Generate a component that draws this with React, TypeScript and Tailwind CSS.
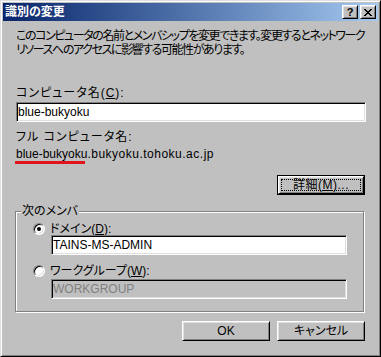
import React from "react";

const raised =
  "border border-t-white border-l-white border-b-black border-r-black shadow-[inset_1px_1px_#dfdfdf,inset_-1px_-1px_#808080]";
const sunken =
  "border border-t-[#808080] border-l-[#808080] border-b-white border-r-white shadow-[inset_1px_1px_#000,inset_-1px_-1px_#dfdfdf]";

function Radio({ checked }: { checked?: boolean }) {
  return (
    <div className="w-[12px] h-[12px] rounded-full border border-t-[#808080] border-l-[#808080] border-b-white border-r-white bg-white shadow-[inset_1px_1px_#000,inset_-1px_-1px_#dfdfdf] flex items-center justify-center shrink-0">
      {checked && <div className="w-[4px] h-[4px] rounded-full bg-black" />}
    </div>
  );
}

function U({ children }: { children: React.ReactNode }) {
  return <span className="underline underline-offset-[1px]">{children}</span>;
}

export default function App() {
  return (
    <div
      className="w-[381px] h-[357px] overflow-hidden bg-[#c0c0c0] border border-t-[#dfdfdf] border-l-[#dfdfdf] border-b-black border-r-black shadow-[inset_1px_1px_#fff,inset_-1px_-1px_#808080] p-[2px] flex flex-col text-black text-[12px] leading-[14px] [font-feature-settings:'palt']"
      style={{ fontFamily: '"Liberation Sans", "Noto Sans CJK JP", sans-serif' }}
    >
      {/* Title bar */}
      <div className="h-[18px] bg-gradient-to-r from-[#0a246a] to-[#a6caf0] flex items-center pl-[2px] pr-[2px]">
        <span className="text-white font-bold text-[12px] leading-[14px] flex-1">識別の変更</span>
        <div className="flex gap-[2px]">
          <div className={`w-[16px] h-[14px] bg-[#c0c0c0] ${raised} flex items-center justify-center`}>
            <span className="font-bold text-[11px] leading-[11px] text-black" style={{ fontFamily: '"Liberation Sans", sans-serif' }}>?</span>
          </div>
          <div className={`w-[16px] h-[14px] bg-[#c0c0c0] ${raised} flex items-center justify-center`}>
            <svg width="8" height="7" viewBox="0 0 8 7" shapeRendering="crispEdges">
              <path d="M0 0h2v1H0zM6 0h2v1H6zM1 1h2v1H1zM5 1h2v1H5zM2 2h4v1H2zM3 3h2v1H3zM2 4h4v1H2zM1 5h2v1H1zM5 5h2v1H5zM0 6h2v1H0zM6 6h2v1H6z" fill="#000" />
            </svg>
          </div>
        </div>
      </div>

      {/* Body */}
      <div className="flex flex-col px-[13px]">
        <p className="mt-[8px] whitespace-nowrap tracking-[-1.42px]">
          このコンピュータの名前とメンバシップを変更できます。変更するとネットワーク
          <br />
          リソースへのアクセスに影響する可能性があります。
        </p>

        <div className="mt-[29px] tracking-[1px]">
          コンピュータ名(<U>C</U>):
        </div>
        <div className={`mt-[2px] h-[20px] w-[350px] bg-white ${sunken} flex items-center px-[1px]`}>
          blue-bukyoku
        </div>

        <div className="mt-[8px] tracking-[1px]">フル コンピュータ名:</div>
        <div className="mt-[3px] whitespace-nowrap">
          <span>blue-bukyoku</span>
          <span className="tracking-[0.5px]">.bukyoku.tohoku.ac.jp</span>
        </div>
        <div className="w-[70px] h-[3px] bg-[#e0141c] -ml-px" />

        <div className="mt-[11px] self-end">
          <div className="w-[88px] h-[20px] border border-black">
            <div className={`w-full h-full bg-[#c0c0c0] ${raised} p-[2px]`}>
              <div className="w-full h-full border border-dotted border-black flex items-center justify-center tracking-[0.5px]">
                詳細(<U>M</U>)...
              </div>
            </div>
          </div>
        </div>

        {/* Group box */}
        <div className="relative mt-[16px] -ml-px w-[349px] border border-[#808080] shadow-[inset_1px_1px_#fff,1px_1px_#fff] pt-[11px] pb-[12px] flex flex-col">
          <span className="absolute -top-[8px] left-[5px] bg-[#c0c0c0] px-[1px]">次のメンバ</span>
          <div className="flex items-center h-[12px] pl-[17px] gap-[5px]">
            <Radio checked />
            <span>
              ドメイン(<U>D</U>):
            </span>
          </div>
          <div className={`mt-[0px] ml-[35px] h-[20px] w-[296px] bg-white ${sunken} flex items-center px-[1px]`}>
            TAINS-MS-ADMIN
          </div>
          <div className="mt-[10px] flex items-center h-[12px] pl-[17px] gap-[5px]">
            <Radio />
            <span>
              ワークグループ(<U>W</U>):
            </span>
          </div>
          <div className={`mt-[2px] ml-[35px] h-[20px] w-[296px] bg-[#c0c0c0] ${sunken} flex items-center px-[1px] text-[#808080]`}>
            WORKGROUP
          </div>
        </div>

        <div className="mt-[9px] flex justify-end gap-[7px]">
          <div className={`w-[88px] h-[20px] bg-[#c0c0c0] ${raised} flex items-center justify-center`}>OK</div>
          <div className={`w-[88px] h-[20px] bg-[#c0c0c0] ${raised} flex items-center justify-center`}>キャンセル</div>
        </div>
      </div>
    </div>
  );
}
